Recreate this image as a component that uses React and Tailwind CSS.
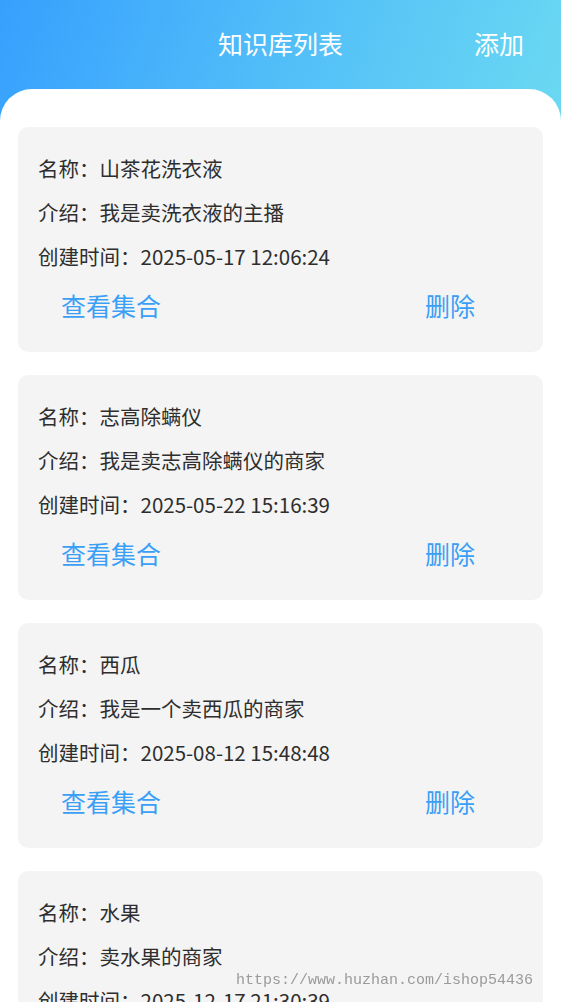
import React from 'react';

const items = [
  { name: '山茶花洗衣液', intro: '我是卖洗衣液的主播', time: '2025-05-17 12:06:24' },
  { name: '志高除螨仪', intro: '我是卖志高除螨仪的商家', time: '2025-05-22 15:16:39' },
  { name: '西瓜', intro: '我是一个卖西瓜的商家', time: '2025-08-12 15:48:48' },
  { name: '水果', intro: '卖水果的商家', time: '2025-12-17 21:30:39' },
];

// One knowledge base card
const KnowledgeCard = ({ item }) => {
  return (
    <div className="rounded-[10px] bg-[#f4f4f4] pt-[19px] pb-[20px]">
      <div className="pl-[20px] text-[20.5px] leading-[44px] text-[#2e2e2e]">
        <p>名称：{item.name}</p>
        <p>介绍：{item.intro}</p>
        <p>创建时间：{item.time}</p>
      </div>
      <div className="mt-[2px] flex h-[52px] items-center justify-between pl-[43px] pr-[68px] text-[25px] text-[#3a9ff6]">
        <span>查看集合</span>
        <span>删除</span>
      </div>
    </div>
  );
};

export default function App() {
  return (
    <div
      className="relative flex min-h-screen flex-col bg-white bg-[linear-gradient(110deg,#36a0fe_0%,#52bef8_50%,#6bd9f2_100%)] bg-size-[100%_130px] bg-no-repeat"
      style={{ fontFamily: '"Noto Sans CJK SC", "Noto Sans", sans-serif' }}
    >
      {/* Header */}
      <div className="relative flex h-[89px] items-center justify-center pb-[2px] text-white">
        <h1 className="text-[25px] leading-none">知识库列表</h1>
        <span className="absolute right-[37px] top-[31px] text-[25px] leading-none">添加</span>
      </div>

      {/* List */}
      <div className="flex flex-1 flex-col gap-[23px] rounded-t-[32px] bg-white px-[18px] pt-[38px] pb-[23px]">
        {items.map((item, i) => (
          <KnowledgeCard key={i} item={item} />
        ))}
      </div>

      {/* Watermark */}
      <div
        className="fixed right-[28px] top-[973px] text-[15px] leading-none text-[#9a9a9a]"
        style={{ fontFamily: '"Liberation Mono", monospace' }}
      >
        https://www.huzhan.com/ishop54436
      </div>
    </div>
  );
}
